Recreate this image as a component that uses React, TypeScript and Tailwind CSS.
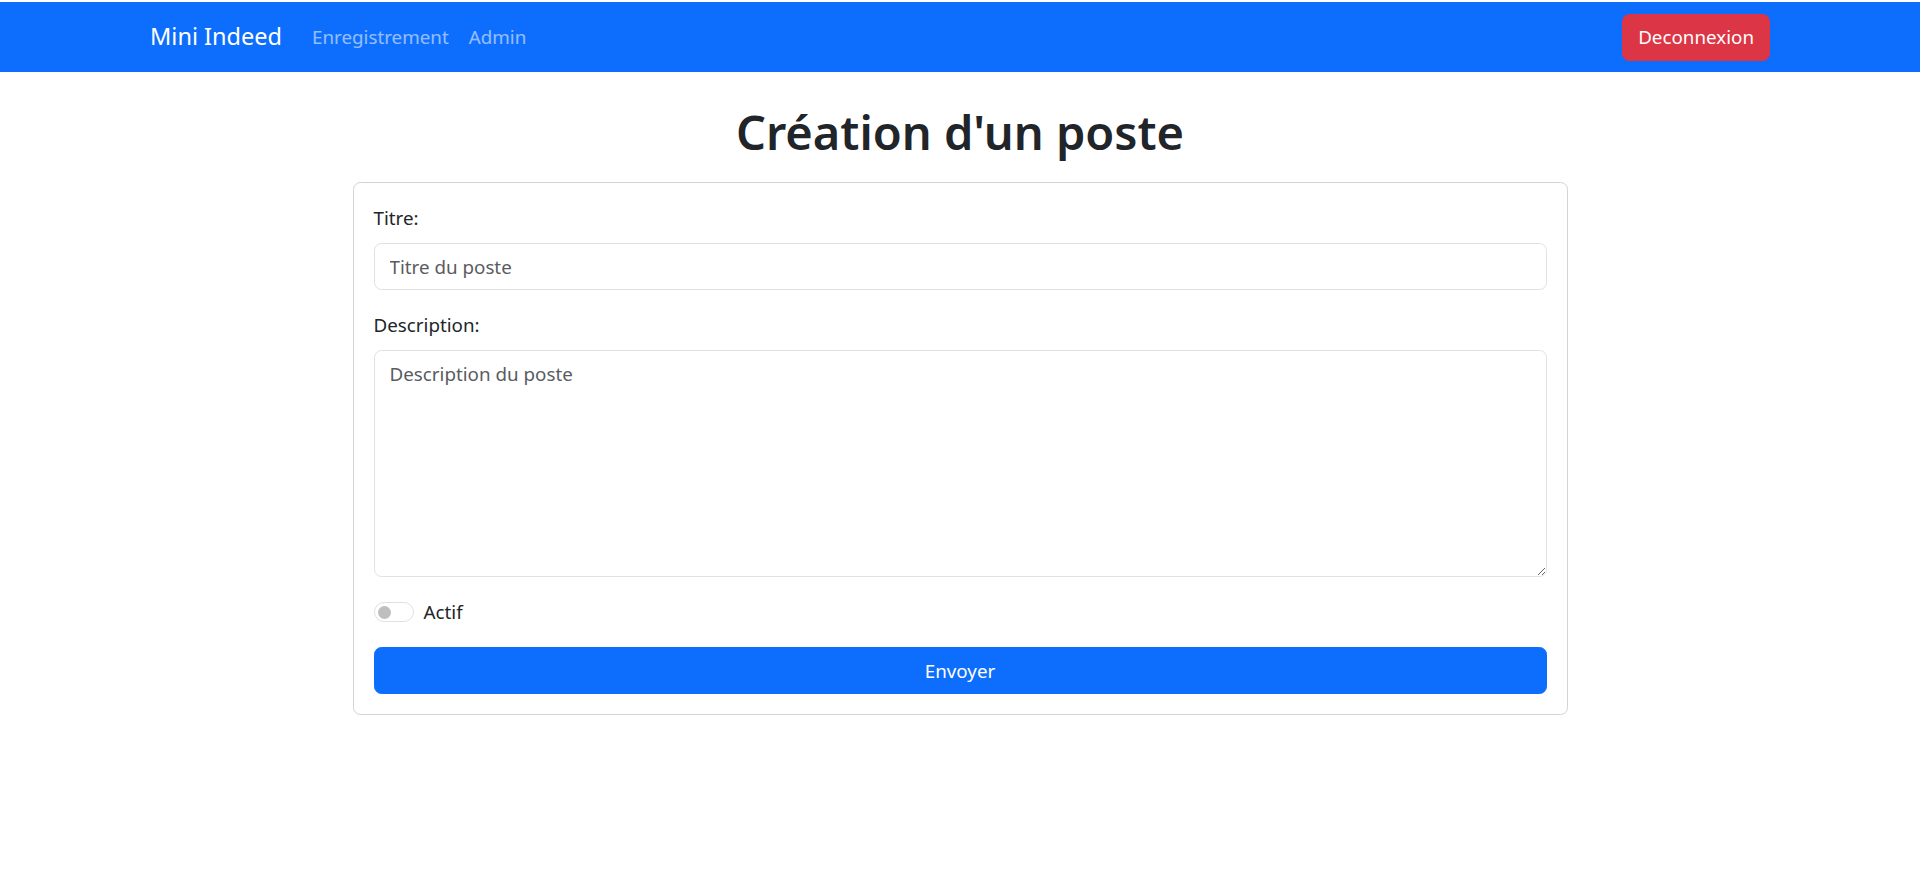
export default function App() {
  return (
    <div className="min-h-screen bg-white pt-[2px] font-['Segoe_UI','Noto_Sans',sans-serif] text-[18.8px] leading-[30px] text-[#212529]">
      <nav className="bg-[#0d6efd] py-[10px]">
        <div className="mx-auto flex w-[1650px] items-center justify-between px-[15px]">
          <div className="flex items-center">
            <a href="#" className="mr-[20px] py-[6.25px] text-[23.5px] leading-[37.5px] text-white">
              Mini Indeed
            </a>
            <a href="#" className="px-[10px] py-[10px] text-white/55">
              Enregistrement
            </a>
            <a href="#" className="px-[10px] py-[10px] text-white/55">
              Admin
            </a>
          </div>
          <button className="rounded-[7.5px] border border-[#dc3545] bg-[#dc3545] px-[15px] py-[7.5px] text-white">
            Deconnexion
          </button>
        </div>
      </nav>

      <main>
        <h1 className="mt-[30px] mb-[20px] text-center text-[47px] leading-[60px] font-semibold">
          Création d'un poste
        </h1>

        <form className="mx-auto w-[1215px] rounded-[7.5px] border border-[#d3d3d3] p-[20px]">
          <div className="mb-[20px]">
            <label className="mb-[10px] block">Titre:</label>
            <input
              type="text"
              placeholder="Titre du poste"
              className="block w-full rounded-[7.5px] border border-[#dee2e6] px-[15px] py-[7.5px] outline-none placeholder:text-[#595c5f]"
            />
          </div>

          <div className="mb-[20px]">
            <label className="mb-[10px] block">Description:</label>
            <textarea
              placeholder="Description du poste"
              className="block h-[227px] w-full rounded-[7.5px] border border-[#dee2e6] px-[15px] py-[7.5px] outline-none placeholder:text-[#595c5f]"
            />
          </div>

          <div className="mb-[20px] flex min-h-[30px] items-center gap-[10px]">
            <span className="flex h-[20px] w-[40px] items-center rounded-full border border-[#dee2e6] px-[3px]">
              <span className="h-[13px] w-[13px] rounded-full bg-[#bfbfbf]" />
            </span>
            <label>Actif</label>
          </div>

          <button
            type="button"
            className="block w-full rounded-[7.5px] border border-[#0d6efd] bg-[#0d6efd] px-[15px] py-[7.5px] text-white"
          >
            Envoyer
          </button>
        </form>
      </main>
    </div>
  )
}
